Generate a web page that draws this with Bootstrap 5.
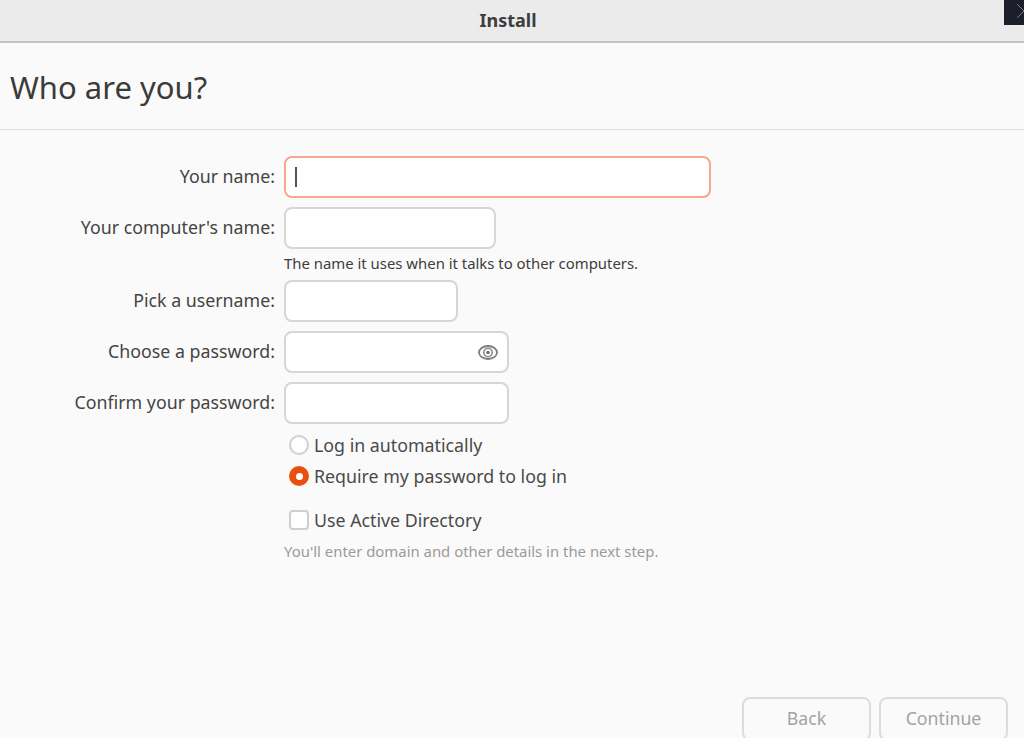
<!DOCTYPE html>
<html lang="en">
<head>
  <meta charset="UTF-8">
  <meta name="viewport" content="width=device-width, initial-scale=1.0">
  <title>Install</title>
  <link href="https://cdn.jsdelivr.net/npm/bootstrap@5.3.0/dist/css/bootstrap.min.css" rel="stylesheet">
  <style>
    html, body {
      height: 738px;
      overflow: hidden;
    }
    body {
      background: #fafafa;
      color: #3d3d3d;
      font-family: "Noto Sans", "Open Sans", sans-serif;
      font-size: 17.8px;
    }
    .title-bar {
      height: 43px;
      background: #ebebeb;
      border-bottom: 2px solid #c4c4c4;
      font-weight: 700;
      font-size: 18px;
    }
    .close-box {
      top: 0;
      right: 0;
      width: 20px;
      height: 25px;
      background: #1c1f2b;
    }
    .page-head {
      height: 87px;
      border-bottom: 1px solid #dedede;
      padding-left: 10px;
      padding-top: 3px;
    }
    .page-head h1 {
      font-size: 31px;
      font-weight: 400;
      margin: 0;
      color: #3b3b3b;
    }
    .form-area {
      padding-top: 26px;
    }
    .form-line {
      display: flex;
      align-items: center;
      margin-bottom: 9px;
    }
    .form-line label {
      width: 275px;
      margin-right: 9px;
      padding-bottom: 2px;
      text-align: right;
      color: #444;
      white-space: nowrap;
    }
    .field {
      height: 42px;
      background: #fff;
      border: 2px solid #d6d6d6;
      border-radius: 8px;
      box-shadow: none;
      padding: 0 9px;
    }
    .field:focus {
      background: #fff;
      border-color: #f5a88c;
      box-shadow: none;
    }
    .field-name { width: 427px; border-color: #f5a88c; }
    .field-computer { width: 212px; }
    .field-user { width: 174px; }
    .field-pass { width: 225px; }
    .eye-icon {
      top: 13px;
      right: 11px;
    }
    .caret-bar {
      top: 11px;
      left: 11px;
      width: 2px;
      height: 20px;
      background: #555;
    }
    .hint-text {
      margin: -5px 0 7px 284px;
      font-size: 14.9px;
      line-height: 20px;
      color: #3d3d3d;
    }
    .hint-muted {
      margin: 9px 0 0 284px;
      font-size: 14.9px;
      line-height: 20px;
      color: #9a9a9a;
    }
    .choice-line {
      display: flex;
      align-items: center;
      gap: 5px;
      margin-left: 289px;
      height: 24px;
      color: #4a4a4a;
    }
    .choice-second { margin-top: 7px; }
    .choice-third { margin-top: 20px; }
    .radio-off, .radio-on, .check-off {
      width: 20px;
      height: 20px;
      flex: none;
    }
    .radio-off {
      border-radius: 50%;
      background: #fff;
      border: 2px solid #d0d0d0;
    }
    .radio-on {
      border-radius: 50%;
      background: #e9500f;
      display: flex;
      align-items: center;
      justify-content: center;
    }
    .radio-on::after {
      content: "";
      width: 7px;
      height: 7px;
      border-radius: 50%;
      background: #fff;
    }
    .check-off {
      border-radius: 4px;
      background: #fff;
      border: 2px solid #cfcfcf;
    }
    .footer-btns {
      top: 697px;
      right: 16px;
      gap: 8px;
    }
    .footer-btns .btn {
      width: 129px;
      height: 44px;
      background: #fafafa;
      border: 2px solid #dcdcdc;
      border-radius: 8px;
      color: #a3a3a3;
      font-size: 17.7px;
      opacity: 1;
      padding-top: 6px;
      padding-bottom: 12px;
    }
  </style>
</head>
<body>
  <div class="title-bar d-flex align-items-center justify-content-center position-relative">
    <span class="pe-2">Install</span>
    <div class="close-box position-absolute">
      <svg width="20" height="25" viewBox="0 0 20 25"><path d="M13 1l7 7M20 8l-7 7" stroke="#77798a" stroke-width="1" fill="none"/></svg>
    </div>
  </div>

  <div class="page-head d-flex align-items-center">
    <h1>Who are you?</h1>
  </div>

  <form class="form-area">
    <div class="form-line">
      <label for="yourName">Your name:</label>
      <div class="position-relative">
        <input class="form-control field field-name" id="yourName" type="text">
        <div class="caret-bar position-absolute"></div>
      </div>
    </div>
    <div class="form-line">
      <label for="computerName">Your computer's name:</label>
      <input class="form-control field field-computer" id="computerName" type="text">
    </div>
    <p class="hint-text">The name it uses when it talks to other computers.</p>
    <div class="form-line">
      <label for="userName">Pick a username:</label>
      <input class="form-control field field-user" id="userName" type="text">
    </div>
    <div class="form-line">
      <label for="password">Choose a password:</label>
      <div class="position-relative">
        <input class="form-control field field-pass" id="password" type="text">
        <svg class="eye-icon position-absolute" width="20" height="17" viewBox="0 0 20 17">
          <ellipse cx="10" cy="8.5" rx="9" ry="6.5" fill="none" stroke="#7d7d7d" stroke-width="1.8"/>
          <circle cx="10" cy="8.5" r="4.2" fill="none" stroke="#8a8a8a" stroke-width="1.6"/>
          <circle cx="10" cy="8.5" r="1.8" fill="#6e6e6e"/>
        </svg>
      </div>
    </div>
    <div class="form-line">
      <label for="confirm">Confirm your password:</label>
      <input class="form-control field field-pass" id="confirm" type="text">
    </div>
    <div class="choice-line"><span class="radio-off"></span><span>Log in automatically</span></div>
    <div class="choice-line choice-second"><span class="radio-on"></span><span>Require my password to log in</span></div>
    <div class="choice-line choice-third"><span class="check-off"></span><span>Use Active Directory</span></div>
    <p class="hint-muted">You'll enter domain and other details in the next step.</p>
  </form>

  <div class="footer-btns d-flex position-absolute">
    <button type="button" class="btn" disabled>Back</button>
    <button type="button" class="btn" disabled>Continue</button>
  </div>
</body>
</html>
